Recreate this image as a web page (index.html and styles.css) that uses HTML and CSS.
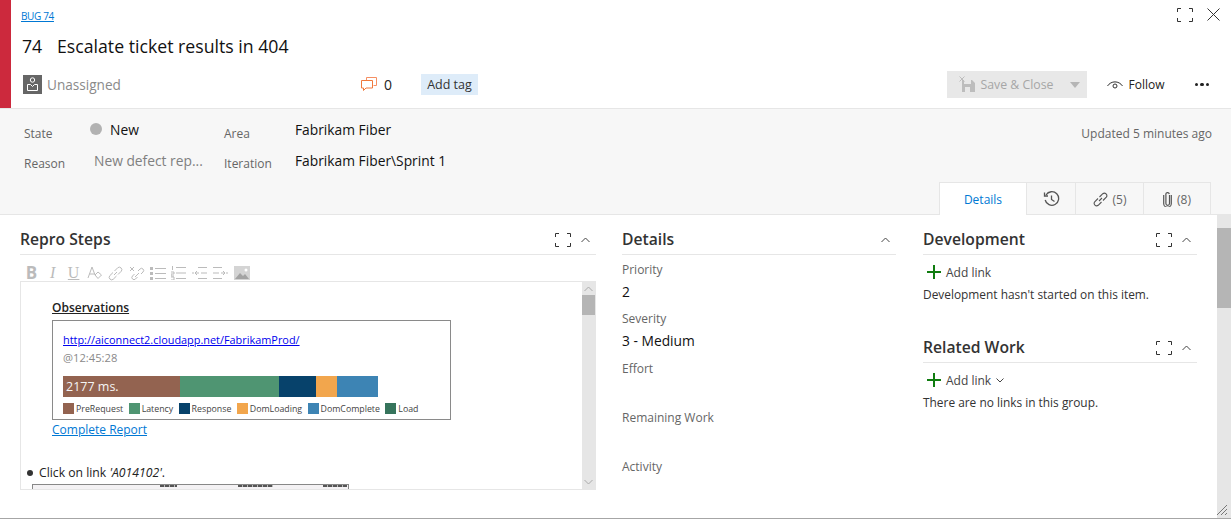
FILE: index.html
```html
<!DOCTYPE html>
<html lang="en">
<head>
  <meta charset="UTF-8" />
  <title>Bug 74 - Escalate ticket results in 404</title>
  <link rel="stylesheet" href="styles.css">
</head>
<body>
  <div class="dialog">
    <header class="head">
      <div class="stripe"></div>
      <div class="head-main">
        <div class="head-top">
          <a class="type-link" href="#">BUG 74</a>
          <div class="win-btns">
            <svg class="ic-expand" width="16" height="14" viewBox="0 0 16 14"><path d="M.5 4V.5H4M12 .5h3.500V4M15.500 10v3.500H12M4 13.500H.5V10" fill="none" stroke="#333" /></svg>
            <svg width="13" height="13" viewBox="0 0 13 13"><path d="M.5.5l12 12M12.500.5l-12 12" fill="none" stroke="#333" /></svg>
          </div>
        </div>
        <div class="title-row"><span class="item-id">74</span><span>Escalate ticket results in 404</span></div>
        <div class="toolbar">
          <div class="assignee">
            <svg width="19" height="19" viewBox="0 0 19 19"><rect width="19" height="19" fill="#666" /><circle cx="9.500" cy="5" r="2.200" fill="none" stroke="#fff" /><path d="M4.500 9.500h3l2 2 2-2h3v6h-10z" fill="none" stroke="#fff" /></svg>
            <span>Unassigned</span>
          </div>
          <div class="comments">
            <svg width="16" height="15" viewBox="0 0 16 15"><path d="M5.500 3.500V.5h10v8h-3" fill="none" stroke="#f58f63" /><path d="M.5 3.500h11v7.500H5l-2.500 2.500V11h-2z" fill="#fff" stroke="#f0783c" /></svg>
            <span>0</span>
          </div>
          <button class="add-tag">Add tag</button>
          <div class="actions">
            <div class="save-btn">
              <svg width="17" height="17" viewBox="0 0 17 17"><path d="M3 4h2v4h7V4h1l3 3v9H3z" fill="#bdbdbd" /><rect x="6" y="11" width="5" height="5" fill="#e8e8e8" /><path d="M.5.500l5 5M5.500.5l-5 5" stroke="#bdbdbd" /></svg>
              <span>Save &amp; Close</span>
              <i class="caret"></i>
            </div>
            <div class="follow">
              <svg width="16" height="10" viewBox="0 0 16 10"><path d="M.5 6C4 .5 12 .5 15.500 6" fill="none" stroke="#333" /><circle cx="8" cy="6" r="2" fill="none" stroke="#333" /></svg>
              <span>Follow</span>
            </div>
            <div class="more"><i></i><i></i><i></i></div>
          </div>
        </div>
      </div>
    </header>

    <section class="band">
      <div class="fields">
        <span class="lbl">State</span>
        <span class="val state"><i class="dot"></i>New</span>
        <span class="lbl">Area</span>
        <span class="val">Fabrikam Fiber</span>
        <span class="lbl">Reason</span>
        <span class="val muted">New defect rep...</span>
        <span class="lbl">Iteration</span>
        <span class="val">Fabrikam Fiber\Sprint 1</span>
      </div>
      <div class="updated">Updated 5 minutes ago</div>
      <nav class="tabs">
        <a class="tab tab-active">Details</a>
        <a class="tab tab-history">
          <svg width="17" height="16" viewBox="0 0 17 16"><path d="M3 4a6.800 6.800 0 1 1-.8 5" fill="none" stroke="#555" stroke-width="1.300" /><path d="M1.500 1.500v3.500h3.500" fill="none" stroke="#555" stroke-width="1.300" /><path d="M8.500 4.500v4l3 2" fill="none" stroke="#555" stroke-width="1.300" /></svg>
        </a>
        <a class="tab tab-links">
          <svg width="15" height="15" viewBox="0 0 15 15"><path d="M6 9l3-3M5 6.500L1.700 9.800a2.500 2.500 0 0 0 3.500 3.500L8.500 10M6.500 5l3.300-3.300a2.500 2.500 0 0 1 3.500 3.500L10 8.500" fill="none" stroke="#555" stroke-width="1.100" /></svg>
          (5)
        </a>
        <a class="tab tab-files">
          <svg width="9" height="15" viewBox="0 0 9 15"><path d="M6.500 3v8.500a1.800 1.800 0 0 1-3.600 0V2.800a1.700 1.700 0 0 1 3.400-.8M8.300 3v8.500a3.800 3.800 0 0 1-7.600 0V3" fill="none" stroke="#555" stroke-width="1.200" /></svg>
          (8)
        </a>
      </nav>
    </section>

    <main class="content">
      <div class="columns">
        <section class="col col-steps">
          <div class="group-head">
            <h2>Repro Steps</h2>
            <div class="group-btns">
              <svg class="ic-expand" width="16" height="14" viewBox="0 0 16 14"><path d="M.5 4V.5H4M12 .5h3.500V4M15.500 10v3.500H12M4 13.500H.5V10" fill="none" stroke="#333" /></svg>
              <svg width="9" height="6" viewBox="0 0 9 6"><path d="M.5 5l4-4 4 4" fill="none" stroke="#444" /></svg>
            </div>
          </div>
          <div class="rte-bar">
            <b>B</b><em>I</em><u>U</u>
            <svg width="15" height="14" viewBox="0 0 15 14"><path d="M1 12L5 1l3 8M2.500 8h5M8 9l3-3 3.500 3-3.500 3.500z" fill="none" stroke="#bbb" /></svg>
            <svg width="15" height="15" viewBox="0 0 15 15"><path d="M6 9l3-3M5 6.500L1.700 9.800a2.500 2.500 0 0 0 3.500 3.500L8.500 10M6.500 5l3.300-3.300a2.500 2.500 0 0 1 3.500 3.500L10 8.500" fill="none" stroke="#bbb" /></svg>
            <svg width="16" height="15" viewBox="0 0 16 15"><path d="M1 1l4 4M5 1L1 5M6 11l4-4M5.500 8L3.500 10a2 2 0 0 0 3 3L8.500 11M9 5l2-2a2 2 0 0 1 3 3l-2 2" fill="none" stroke="#bbb" /></svg>
            <svg width="16" height="13" viewBox="0 0 16 13"><path d="M5 1.500h11M5 6.500h11M5 11.500h11" stroke="#bbb" /><path d="M0 0h3v3H0zM0 5h3v3H0zM0 10h3v3H0z" fill="#bbb" /></svg>
            <svg width="15" height="14" viewBox="0 0 15 14"><path d="M5 1.500h10M5 7h10M5 12.500h10M1.500 0v4M0 6h3v2H0v2h3M0 11h3v3H0" fill="none" stroke="#bbb" /></svg>
            <svg width="15" height="12" viewBox="0 0 15 12"><path d="M6 .5h9M9 6h6M6 11.500h9M0 6h2M7 6H3M5 4L3 6l2 2" fill="none" stroke="#bbb" /></svg>
            <svg width="15" height="12" viewBox="0 0 15 12"><path d="M0 .5h9M0 6h6M0 11.500h9M13 6h2M8 6h4M10 4l2 2-2 2" fill="none" stroke="#bbb" /></svg>
            <svg width="16" height="14" viewBox="0 0 16 14"><path d="M0 0h16v14H0z" fill="#d4d4d4" /><path d="M1 13l5-6 3 3 2-2 4 5z" fill="#a3a3a3" /><circle cx="12" cy="4" r="1.500" fill="#fff" /></svg>
          </div>
          <div class="editor">
            <div class="editor-body">
              <p class="obs-title">Observations</p>
              <div class="report">
                <a class="report-url" href="#">http://aiconnect2.cloudapp.net/FabrikamProd/</a>
                <div class="report-time">@12:45:28</div>
                <div class="timing-bar">
                  <span class="seg seg-pre">2177 ms.</span>
                  <span class="seg seg-lat"></span>
                  <span class="seg seg-res"></span>
                  <span class="seg seg-dom"></span>
                  <span class="seg seg-com"></span>
                </div>
                <div class="legend">
                  <span><i class="seg-pre"></i>PreRequest</span>
                  <span><i class="seg-lat"></i>Latency</span>
                  <span><i class="seg-res"></i>Response</span>
                  <span><i class="seg-dom"></i>DomLoading</span>
                  <span><i class="seg-com"></i>DomComplete</span>
                  <span><i class="seg-load"></i>Load</span>
                </div>
              </div>
              <a class="report-link" href="#">Complete Report</a>
              <div class="step">Click on link&nbsp;<em>'A014102'</em>.</div>
              <div class="shot"><i class="shot-a"></i><i class="shot-b"></i><i class="shot-c"></i></div>
            </div>
            <div class="mini-scroll">
              <svg width="9" height="6" viewBox="0 0 9 6"><path d="M.5 5l4-4 4 4" fill="none" stroke="#aaa" /></svg>
              <div class="mini-thumb"></div>
              <svg class="mini-down" width="9" height="6" viewBox="0 0 9 6"><path d="M.5 1l4 4 4-4" fill="none" stroke="#aaa" /></svg>
            </div>
          </div>
        </section>

        <section class="col col-details">
          <div class="group-head">
            <h2>Details</h2>
            <div class="group-btns">
              <svg width="9" height="6" viewBox="0 0 9 6"><path d="M.5 5l4-4 4 4" fill="none" stroke="#444" /></svg>
            </div>
          </div>
          <div class="detail-list">
            <div class="detail"><span class="lbl">Priority</span><span class="val">2</span></div>
            <div class="detail"><span class="lbl">Severity</span><span class="val">3 - Medium</span></div>
            <div class="detail detail-empty"><span class="lbl">Effort</span><span class="val"></span></div>
            <div class="detail"><span class="lbl">Remaining Work</span><span class="val"></span></div>
            <div class="detail"><span class="lbl">Activity</span><span class="val"></span></div>
          </div>
        </section>

        <section class="col col-links">
          <div class="group-head">
            <h2>Development</h2>
            <div class="group-btns">
              <svg class="ic-expand" width="16" height="14" viewBox="0 0 16 14"><path d="M.5 4V.5H4M12 .5h3.500V4M15.500 10v3.500H12M4 13.500H.5V10" fill="none" stroke="#333" /></svg>
              <svg width="9" height="6" viewBox="0 0 9 6"><path d="M.5 5l4-4 4 4" fill="none" stroke="#444" /></svg>
            </div>
          </div>
          <div class="add-link">
            <svg width="14" height="14" viewBox="0 0 14 14"><path d="M7 0v14M0 7h14" stroke="#107c10" stroke-width="2" /></svg>
            <span>Add link</span>
          </div>
          <p class="note">Development hasn't started on this item.</p>

          <div class="group-head group-second">
            <h2>Related Work</h2>
            <div class="group-btns">
              <svg class="ic-expand" width="16" height="14" viewBox="0 0 16 14"><path d="M.5 4V.5H4M12 .5h3.500V4M15.500 10v3.500H12M4 13.500H.5V10" fill="none" stroke="#333" /></svg>
              <svg width="9" height="6" viewBox="0 0 9 6"><path d="M.5 5l4-4 4 4" fill="none" stroke="#444" /></svg>
            </div>
          </div>
          <div class="add-link">
            <svg width="14" height="14" viewBox="0 0 14 14"><path d="M7 0v14M0 7h14" stroke="#107c10" stroke-width="2" /></svg>
            <span>Add link</span>
            <svg width="8" height="5" viewBox="0 0 8 5"><path d="M.5.5L4 4 7.500.5" fill="none" stroke="#444" /></svg>
          </div>
          <p class="note">There are no links in this group.</p>
        </section>
      </div>
      <div class="page-scroll"><div class="page-thumb"></div></div>
      <svg class="grip" width="12" height="12" viewBox="0 0 12 12"><path d="M11 1L1 11M11 5l-6 6M11 9l-2 2" stroke="#777" /></svg>
    </main>
  </div>
</body>
</html>
```

FILE: styles.css
```css
* {
  box-sizing: border-box;
}

html, body {
  margin: 0;
  height: 100%;
  overflow: hidden;
}

body {
  font-family: 'Open Sans', 'Noto Sans', sans-serif;
  font-size: 13px;
  color: #222;
  background: #fff;
}

svg {
  display: block;
  flex: none;
}

.dialog {
  height: 519px;
  display: flex;
  flex-direction: column;
  border-bottom: 1px solid #a6a6a6;
}

/* Header */
.head {
  height: 109px;
  flex: none;
  display: flex;
  border-bottom: 1px solid #e6e6e6;
}

.stripe {
  width: 11px;
  background: #cc293d;
}

.head-main {
  flex: 1;
  padding-left: 10px;
  min-width: 0;
}

.head-top {
  height: 30px;
  display: flex;
  justify-content: space-between;
  padding-top: 8px;
}

.type-link {
  font-size: 10px;
  letter-spacing: -.35px;
  color: #0078d4;
  text-decoration: underline;
  line-height: 16px;
}

.win-btns {
  display: flex;
  gap: 14px;
  padding-right: 11px;
  align-items: flex-start;
}

.title-row {
  height: 20px;
  margin-top: 6px;
  padding-left: 1px;
  font-size: 17.700px;
  line-height: 20px;
  color: #111;
  display: flex;
}

.item-id {
  width: 35px;
}

.toolbar {
  margin-top: 15px;
  height: 27px;
  display: flex;
  align-items: center;
  padding-left: 2px;
}

.assignee {
  width: 338px;
  display: flex;
  align-items: center;
  gap: 5px;
  font-size: 13.600px;
  color: #8a8a8a;
}

.comments {
  width: 60px;
  display: flex;
  align-items: center;
  gap: 7px;
  font-size: 14px;
}

.add-tag {
  height: 21px;
  width: 57px;
  border: none;
  padding: 0;
  background: #deecf9;
  font: inherit;
  font-size: 12.500px;
  color: #333;
}

.actions {
  margin-left: auto;
  display: flex;
  align-items: center;
  padding-right: 22px;
}

.save-btn {
  width: 140px;
  height: 27px;
  background: #e8e8e8;
  color: #a6a6a6;
  font-size: 12.300px;
  display: flex;
  align-items: center;
  padding-left: 12px;
  gap: 5px;
}

.caret {
  margin-left: 12px;
  border: 5px solid transparent;
  border-top: 6px solid #b5b5b5;
  border-bottom: 0;
}

.follow {
  display: flex;
  align-items: center;
  gap: 6px;
  margin-left: 20px;
  font-size: 12px;
  color: #222;
}

.more {
  display: flex;
  gap: 2px;
  margin-left: 30px;
}

.more i {
  width: 3.500px;
  height: 3.500px;
  border-radius: 50%;
  background: #222;
}

/* State band */
.band {
  height: 106px;
  flex: none;
  background: #f7f7f7;
  border-bottom: 1px solid #e6e6e6;
  position: relative;
  padding: 6px 20px 0 24px;
  display: flex;
  flex-direction: column;
}

.fields {
  display: grid;
  grid-template-columns: 70px 130px 71px auto;
  grid-auto-rows: 31px;
  align-items: center;
  width: 600px;
}

.lbl {
  font-size: 12px;
  color: #666;
}

.fields .lbl {
  margin-top: 5px;
}

.fields .lbl:nth-child(n+5) {
  margin-top: 3px;
}

.val {
  font-size: 13.800px;
  color: #111;
  margin-top: -3px;
}

.val.muted {
  color: #808080;
}

.state {
  display: flex;
  align-items: center;
  gap: 8px;
  margin-left: -4px;
}

.dot {
  width: 12px;
  height: 12px;
  border-radius: 50%;
  background: #b2b2b2;
}

.updated {
  position: absolute;
  right: 19px;
  top: 16px;
  font-size: 12px;
  color: #666;
}

.tabs {
  margin-top: auto;
  align-self: flex-end;
  display: flex;
  height: 33px;
  border-top: 1px solid #e6e6e6;
  margin-bottom: -1px;
}

.tab {
  display: flex;
  align-items: center;
  justify-content: center;
  gap: 5px;
  font-size: 12px;
  color: #666;
  border-right: 1px solid #e6e6e6;
}

.tab-active {
  width: 88px;
  background: #fff;
  color: #0078d4;
  border-left: 1px solid #e6e6e6;
}

.tab-history {
  width: 49px;
}

.tab-links {
  width: 68px;
}

.tab-files {
  width: 67px;
}

/* Content */
.content {
  flex: 1;
  display: flex;
  min-height: 0;
  position: relative;
}

.columns {
  flex: 1;
  display: grid;
  grid-template-columns: 576px 274px 274px;
  column-gap: 26px;
  padding: 11px 0 0 20px;
  min-width: 0;
}

.col {
  min-width: 0;
}

.col-links {
  margin: 0 -1px 0 1px;
}

.group-head {
  height: 29px;
  display: flex;
  align-items: center;
  justify-content: space-between;
  border-bottom: 1px solid #e6e6e6;
}

.group-head h2 {
  margin: 0;
  font-size: 15.700px;
  font-weight: 600;
  color: #333;
  margin-top: -2px;
}

.group-btns {
  display: flex;
  align-items: center;
  gap: 10px;
  padding-right: 6px;
}

.rte-bar {
  height: 26px;
  display: grid;
  grid-template-columns: repeat(11, 21.050px);
  align-items: center;
  justify-items: center;
  padding: 10px 0 0 1px;
  font-family: 'Liberation Serif', serif;
  color: #bbb;
  font-size: 16px;
  line-height: 16px;
}

.rte-bar b {
  font-family: 'Open Sans', sans-serif;
  font-size: 17px;
}

.editor {
  height: 209px;
  border: 1px solid #e6e6e6;
  display: flex;
  overflow: hidden;
}

.editor-body {
  flex: 1;
  min-width: 0;
  overflow: hidden;
  padding: 17px 0 0 31px;
  font-size: 12px;
  color: #222;
}

.obs-title {
  margin: 0 0 4px;
  font-weight: 600;
  text-decoration: underline;
  line-height: 17px;
}

.report {
  width: 399px;
  height: 100px;
  border: 1px solid #8a8a8a;
  padding: 10px 0 0 10px;
}

.report-url {
  display: block;
  color: #0000ee;
  font-size: 10.900px;
  line-height: 18px;
}

.report-time {
  color: #8a8a8a;
  font-size: 11.200px;
  line-height: 18px;
}

.timing-bar {
  display: flex;
  height: 21px;
  margin-top: 9px;
}

.seg {
  display: block;
}

.seg-pre {
  width: 117px;
  background: #936350;
  color: #f5f5f5;
  font-size: 12.500px;
  line-height: 21px;
  padding-left: 3px;
}

.seg-lat {
  width: 99px;
  background: #4f9572;
}

.seg-res {
  width: 37px;
  background: #07426b;
}

.seg-dom {
  width: 21px;
  background: #f2a64d;
}

.seg-com {
  width: 41px;
  background: #3d84b4;
}

.legend {
  display: flex;
  gap: 5.400px;
  margin-top: 6px;
  font-size: 8.800px;
  color: #444;
}

.legend span {
  display: flex;
  gap: 2px;
  line-height: 13px;
}

.legend i {
  width: 11px;
  height: 11px;
  padding: 0;
}

.seg-load {
  background: #36745c;
}

.report-link {
  display: block;
  margin-top: 1px;
  color: #0078d4;
  font-size: 12px;
  line-height: 18px;
}

.step {
  display: flex;
  align-items: center;
  margin: 25px 0 0 -25px;
  font-size: 12.200px;
  line-height: 18px;
}

.step::before {
  content: '';
  width: 6px;
  height: 6px;
  margin-right: 6px;
  border-radius: 50%;
  background: #333;
}

.shot {
  position: relative;
  width: 317px;
  height: 40px;
  margin: 2px 0 0 -20px;
  border: 1px solid #888;
  background: #f4f2f4;
}

.shot i {
  position: absolute;
  top: 0;
  height: 2px;
  background: repeating-linear-gradient(90deg, #555 0 4px, #bbb 4px 5px);
}

.shot-a {
  left: 127px;
  width: 17px;
}

.shot-b {
  left: 205px;
  width: 35px;
}

.shot-c {
  left: 290px;
  width: 24px;
}

.mini-scroll {
  width: 13px;
  margin-right: 0;
  background: #e6e6e6;
  display: flex;
  flex-direction: column;
  align-items: center;
  padding-top: 4px;
}

.mini-thumb {
  width: 100%;
  height: 20px;
  background: #b5b5b5;
  margin-top: 3px;
}

.mini-down {
  margin-top: auto;
  margin-bottom: 4px;
}

.detail-list {
  padding-top: 6px;
}

.detail {
  height: 49px;
  display: flex;
  flex-direction: column;
}

.detail-empty {
  margin-top: 1px;
}

.detail .lbl {
  line-height: 18px;
}

.detail .val {
  margin-top: 3px;
  line-height: 20px;
}

.add-link {
  display: flex;
  align-items: center;
  gap: 5px;
  height: 18px;
  margin: 8px 0 0 4px;
  font-size: 12px;
  color: #444;
}

.note {
  margin: 4px 0 0;
  font-size: 11.900px;
  line-height: 18px;
  color: #333;
}

.group-second {
  margin-top: 31px;
}

.page-scroll {
  width: 14px;
  background: #e6e6e6;
  padding-top: 13px;
  flex: none;
}

.page-thumb {
  height: 80px;
  background: #b5b5b5;
}

.grip {
  position: absolute;
  right: 3px;
  bottom: 2px;
}
```
